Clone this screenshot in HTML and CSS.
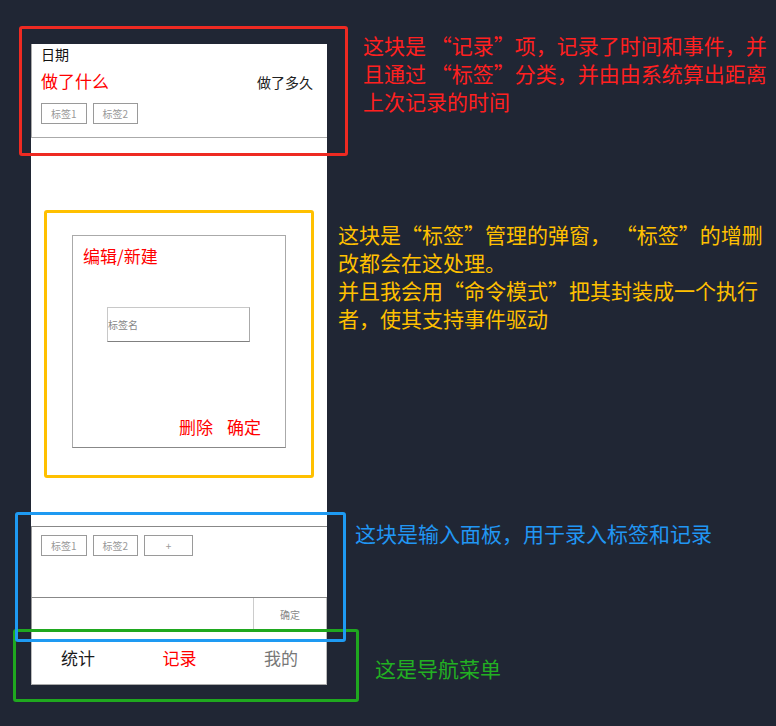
FILE: index.html
```html
<!DOCTYPE html>
<html lang="zh-CN">
<head>
<meta charset="utf-8">
<title>记录</title>
<link rel="stylesheet" href="styles.css">
</head>
<body>
<div class="canvas">
  <div class="phone">
    <section class="record">
      <div class="date">日期</div>
      <div class="record-main"><span class="what">做了什么</span><span class="duration">做了多久</span></div>
      <div class="tags"><span class="tag">标签1</span><span class="tag">标签2</span></div>
    </section>
    <section class="stage">
      <div class="dialog">
        <div class="dialog-title">编辑/新建</div>
        <input class="tag-input" placeholder="标签名">
        <div class="dialog-actions"><span>删除</span><span>确定</span></div>
      </div>
    </section>
    <section class="panel">
      <div class="tags"><span class="tag">标签1</span><span class="tag">标签2</span><span class="tag tag-add">+</span></div>
    </section>
    <div class="entry"><div class="entry-field"></div><div class="entry-btn">确定</div></div>
    <nav class="nav"><span class="nav-item">统计</span><span class="nav-item active">记录</span><span class="nav-item muted">我的</span></nav>
  </div>

  <div class="frame frame-red"></div>
  <div class="frame frame-yellow"></div>
  <div class="frame frame-green"></div>
  <div class="frame frame-blue"></div>

  <p class="note note-red">这块是 “记录”项，记录了时间和事件，并<br>且通过 “标签”分类，并由由系统算出距离<br>上次记录的时间</p>
  <p class="note note-yellow">这块是“标签”管理的弹窗， “标签”的增删<br>改都会在这处理。<br>并且我会用“命令模式”把其封装成一个执行<br>者，使其支持事件驱动</p>
  <p class="note note-blue">这块是输入面板，用于录入标签和记录</p>
  <p class="note note-green">这是导航菜单</p>
</div>
</body>
</html>
```

FILE: styles.css
```css
* { box-sizing: border-box; }

html, body {
  margin: 0;
  padding: 0;
  background: #202634;
}

body {
  font-family: "Noto Sans CJK SC", "Noto Sans", sans-serif;
  color: #222;
}

.canvas {
  position: relative;
  width: 776px;
  height: 726px;
  overflow: hidden;
  padding: 44px 0 0 31px;
}

.phone {
  width: 296px;
  background: #fff;
  display: flex;
  flex-direction: column;
}

/* record card */
.record {
  height: 94px;
  border-left: 1px solid #aaa;
  border-bottom: 1px solid #aaa;
  padding: 0 14px 0 9px;
}

.date {
  font-size: 14px;
  line-height: 20px;
  color: #111;
}

.record-main {
  margin-top: 5px;
  display: flex;
  justify-content: space-between;
  align-items: baseline;
  line-height: 24px;
}

.what {
  font-size: 17px;
  color: #ff0000;
}

.duration {
  font-size: 14px;
  color: #222;
}

.tags {
  margin-top: 9px;
  display: flex;
  gap: 6px;
}

.tag {
  display: inline-block;
  height: 21px;
  line-height: 19px;
  padding: 0 9px;
  border: 1px solid #9a9a9a;
  font-size: 10px;
  color: #999;
  text-align: center;
}

.tag-add {
  width: 49px;
}

/* dialog stage */
.stage {
  height: 388px;
  padding-top: 97px;
}

.dialog {
  width: 214px;
  height: 213px;
  margin: 0 auto;
  border: 1px solid #aaa;
  border-bottom-color: #888;
  display: flex;
  flex-direction: column;
  padding: 8px 24px 8px 10px;
}

.dialog-title {
  font-size: 17px;
  line-height: 24px;
  color: #ff0000;
}

.tag-input {
  display: block;
  width: 143px;
  height: 35px;
  margin: 39px 0 0 24px;
  padding: 0;
  border: 1px solid #c8c8c8;
  border-bottom-color: #808080;
  border-right-color: #aaa;
  font-family: "Noto Sans CJK SC", sans-serif;
  font-size: 10px;
  color: #555;
  outline: none;
  background: #fff;
}

.tag-input::placeholder {
  color: #888;
}

.dialog-actions {
  margin-top: auto;
  display: flex;
  justify-content: flex-end;
  gap: 14px;
  font-size: 17px;
  line-height: 24px;
  color: #ff0000;
}

/* input panel */
.panel {
  height: 72px;
  border-top: 1px solid #888;
  border-left: 1px solid #999;
  border-bottom: 1px solid #888;
  padding: 0 0 0 9px;
}

.panel .tags {
  margin-top: 8px;
}

.entry {
  height: 34px;
  display: flex;
  border-left: 1px solid #999;
}

.entry-field {
  flex: 1;
}

.entry-btn {
  width: 74px;
  border-left: 1px solid #ccc;
  border-right: 1px solid #bbb;
  border-bottom: 1px solid #ccc;
  font-size: 10px;
  color: #888;
  display: flex;
  align-items: center;
  justify-content: center;
}

/* nav */
.nav {
  height: 53px;
  border-left: 1px solid #bbb;
  border-right: 1px solid #bbb;
  border-bottom: 1px solid #aaa;
  display: flex;
  justify-content: space-between;
  align-items: center;
  padding: 0 28px 0 29px;
  font-size: 17px;
  line-height: 24px;
}

.nav-item { color: #1a1a1a; }
.nav-item.active { color: #ff0000; }
.nav-item.muted { color: #777; }

/* highlight frames (overlays) */
.frame {
  position: absolute;
  border: 3px solid;
  border-radius: 3px;
}

.frame-red {
  left: 19px; top: 26px; width: 329px; height: 130px;
  border-color: #ee2a22;
}

.frame-yellow {
  left: 44px; top: 210px; width: 270px; height: 268px;
  border-color: #ffc000;
}

.frame-blue {
  left: 15px; top: 512px; width: 331px; height: 130px;
  border-color: #1e9af2;
}

.frame-green {
  left: 13px; top: 629px; width: 346px; height: 73px;
  border-color: #1fa81f;
}

/* callout notes */
.note {
  position: absolute;
  margin: 0;
  font-size: 21px;
  line-height: 28px;
  white-space: nowrap;
}

.note-red { left: 363px; top: 31px; color: #ff2020; }
.note-yellow { left: 338px; top: 220px; color: #ffc000; }
.note-blue { left: 355px; top: 519px; color: #2196f3; }
.note-green { left: 375px; top: 654px; color: #22b022; }
```
